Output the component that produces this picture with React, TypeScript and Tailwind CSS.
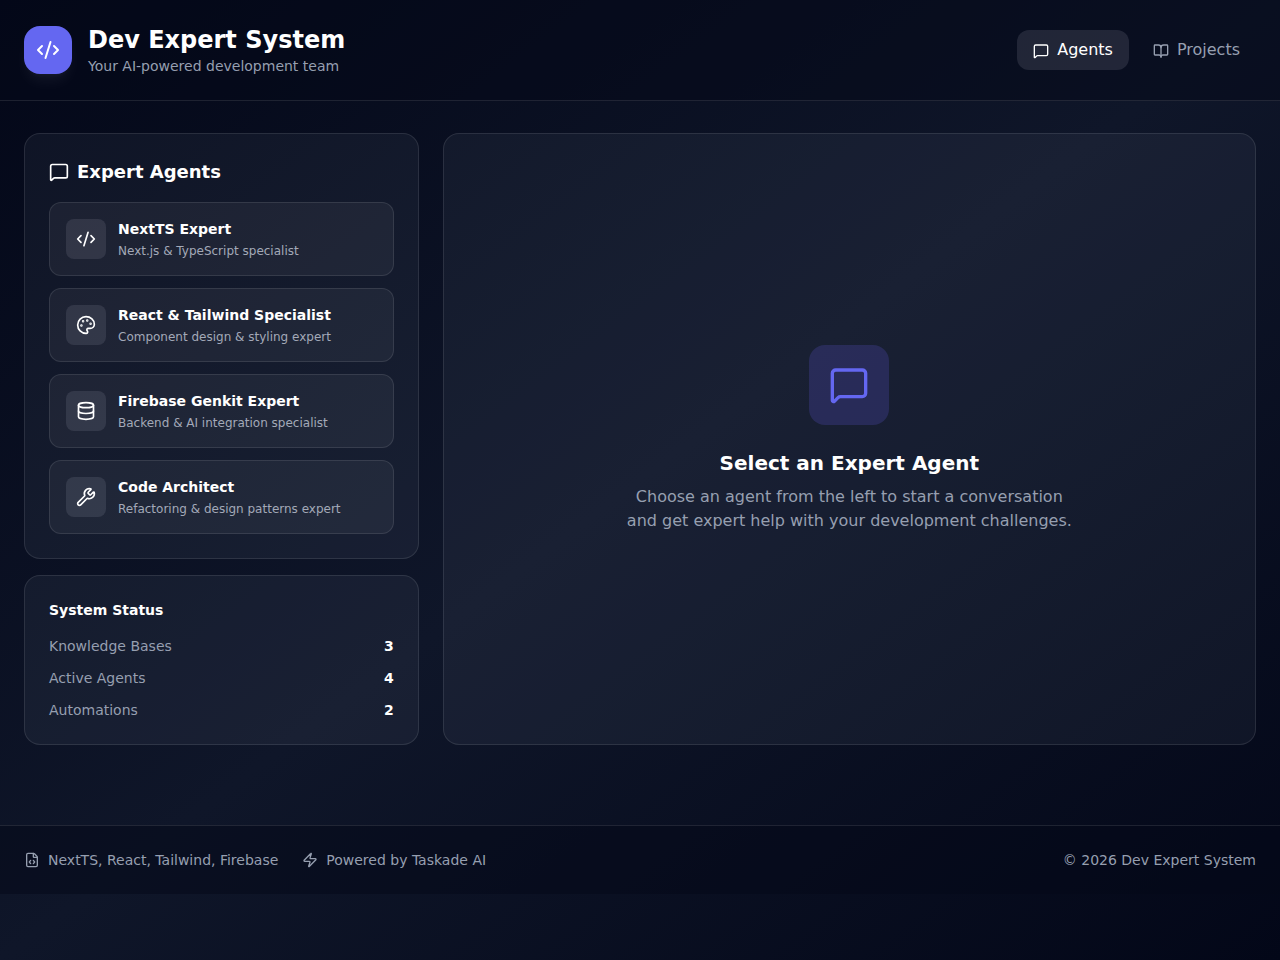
import {
  BookOpen,
  CodeXml,
  Database,
  FileCode,
  MessageSquare,
  Palette,
  Wrench,
  Zap,
  type LucideIcon,
} from 'lucide-react'

interface Agent {
  id: string
  name: string
  description: string
  icon: LucideIcon
}

const agents: Agent[] = [
  { id: 'nextts', name: 'NextTS Expert', description: 'Next.js & TypeScript specialist', icon: CodeXml },
  { id: 'react', name: 'React & Tailwind Specialist', description: 'Component design & styling expert', icon: Palette },
  { id: 'firebase', name: 'Firebase Genkit Expert', description: 'Backend & AI integration specialist', icon: Database },
  { id: 'architect', name: 'Code Architect', description: 'Refactoring & design patterns expert', icon: Wrench },
]

const stats = [
  { label: 'Knowledge Bases', value: 3 },
  { label: 'Active Agents', value: 4 },
  { label: 'Automations', value: 2 },
]

function Header() {
  return (
    <header className="border-b border-white/10 bg-[#030718]/50">
      <div className="flex items-center justify-between p-6">
        <div className="flex items-center gap-4">
          <div className="flex h-12 w-12 items-center justify-center rounded-2xl bg-[#6467f1] shadow-lg shadow-white/6">
            <CodeXml className="h-6 w-6 text-white" />
          </div>
          <div>
            <h1 className="text-2xl font-bold text-white">Dev Expert System</h1>
            <p className="text-sm text-[#969fb0]">Your AI-powered development team</p>
          </div>
        </div>
        <nav className="flex gap-2">
          <button className="rounded-xl bg-[#eef0ff]/11 px-4 py-2 text-white">
            <MessageSquare className="mr-2 inline-block h-4 w-4" />
            Agents
          </button>
          <button className="rounded-xl px-4 py-2 text-[#969fb0]">
            <BookOpen className="mr-2 inline-block h-4 w-4" />
            Projects
          </button>
        </nav>
      </div>
    </header>
  )
}

function AgentCard({ agent }: { agent: Agent }) {
  const Icon = agent.icon

  return (
    <button className="flex w-full items-center gap-3 rounded-xl border border-white/10 bg-white/5 p-4 text-left">
      <div className="flex h-10 w-10 items-center justify-center rounded-lg bg-[#eef0ff]/10">
        <Icon className="h-5 w-5 text-white" />
      </div>
      <div>
        <h3 className="text-sm font-semibold text-white">{agent.name}</h3>
        <p className="mt-1 text-xs text-[#a3a9b8]">{agent.description}</p>
      </div>
    </button>
  )
}

function Footer() {
  return (
    <footer className="mt-12 border-t border-white/10 bg-[#030718]/50">
      <div className="flex items-center justify-between p-6 text-sm text-[#969fb0]">
        <div className="flex items-center gap-6">
          <div className="flex items-center gap-2">
            <FileCode className="h-4 w-4" />
            <span>NextTS, React, Tailwind, Firebase</span>
          </div>
          <div className="flex items-center gap-2">
            <Zap className="h-4 w-4" />
            <span>Powered by Taskade AI</span>
          </div>
        </div>
        <p>© 2026 Dev Expert System</p>
      </div>
    </footer>
  )
}

export default function App() {
  return (
    <div className="min-h-screen bg-linear-to-br/srgb from-[#030718] via-[#0f1629] to-[#030718] font-['DejaVu_Sans',sans-serif]">
      <Header />

      <main className="px-6 py-8">
        <div className="grid grid-cols-3 gap-6">
          <div className="space-y-4">
            {/* Agent list */}
            <section className="rounded-2xl border border-white/10 bg-[#dfe6ff]/5 p-6">
              <h2 className="mb-4 flex items-center gap-2 text-lg font-semibold text-white">
                <MessageSquare className="h-5 w-5" />
                Expert Agents
              </h2>
              <div className="space-y-3">
                {agents.map((agent) => (
                  <AgentCard key={agent.id} agent={agent} />
                ))}
              </div>
            </section>

            {/* System status */}
            <section className="rounded-2xl border border-white/10 bg-[#dfe6ff]/5 p-6">
              <h3 className="mb-4 text-sm font-semibold text-white">System Status</h3>
              <div className="space-y-3 text-sm">
                {stats.map((stat) => (
                  <div key={stat.label} className="flex items-center justify-between">
                    <span className="text-[#969fb0]">{stat.label}</span>
                    <span className="font-semibold text-white">{stat.value}</span>
                  </div>
                ))}
              </div>
            </section>
          </div>

          {/* Empty conversation */}
          <section className="col-span-2 flex flex-col items-center justify-center rounded-2xl border border-white/10 bg-[#dfe6ff]/5 text-center">
            <div className="mb-6 flex h-20 w-20 items-center justify-center rounded-2xl bg-[#6861f1]/20">
              <MessageSquare className="h-10 w-10 text-[#6467f1]" />
            </div>
            <h2 className="mb-2 text-xl font-semibold text-white">Select an Expert Agent</h2>
            <p className="max-w-md text-[#969fb0]">
              Choose an agent from the left to start a conversation and get expert help with your development challenges.
            </p>
          </section>
        </div>
      </main>

      <Footer />
    </div>
  )
}
